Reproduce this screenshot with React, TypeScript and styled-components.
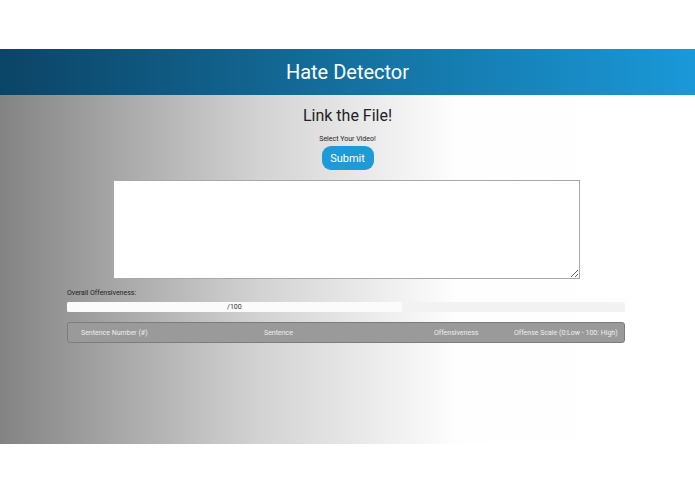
import styled, { createGlobalStyle } from 'styled-components';

const GlobalStyle = createGlobalStyle`
  html, body {
    margin: 0;
    padding: 0;
    background: #fff;
    font-family: Roboto, "Liberation Sans", sans-serif;
  }
`;

const Page = styled.div`
  padding-top: 49px;
  width: 695px;
`;

const Header = styled.header`
  height: 46px;
  display: flex;
  align-items: center;
  justify-content: center;
  background: linear-gradient(90deg, #0b4466 0%, #14709f 50%, #1a98d8 100%);
  color: #fff;
  font-size: 20px;
`;

const Main = styled.main`
  height: 349px;
  background: linear-gradient(90deg, #838383 0%, #d2d2d2 37%, #fefefe 66%, #fff 100%);
  display: flex;
  flex-direction: column;
  align-items: center;
`;

const Heading = styled.h2`
  margin: 11px 0 0;
  font-size: 16px;
  font-weight: 400;
  color: #222;
  line-height: 19px;
`;

const Hint = styled.p`
  margin: 10px 0 0;
  font-size: 7px;
  line-height: 9px;
  color: #222;
`;

const SubmitButton = styled.button`
  margin-top: 2px;
  width: 52px;
  height: 24px;
  border: none;
  border-radius: 9px;
  background: #1f9ad9;
  color: #fff;
  font-family: Roboto, "Liberation Sans", sans-serif;
  font-size: 11px;
  padding: 0;
`;

const TextBox = styled.textarea`
  margin-top: 10px;
  width: 467px;
  height: 99px;
  box-sizing: border-box;
  border: 1px solid #a8a8a8;
  background: #fff;
  resize: vertical;
  align-self: flex-start;
  margin-left: 113px;
`;

const Section = styled.section`
  align-self: stretch;
  padding: 0 70px 0 67px;
`;

const Label = styled.div`
  margin-top: 10px;
  font-size: 7px;
  line-height: 9px;
  color: #222;
`;

const Track = styled.div`
  margin-top: 4px;
  height: 10px;
  background: #f2f2f2;
  border-radius: 2px;
  display: flex;
`;

const Fill = styled.div`
  background: #fbfbfb;
  border-radius: 2px 0 0 2px;
  display: flex;
  align-items: center;
  justify-content: center;
  font-size: 7px;
  color: #333;
`;

const TableHead = styled.div`
  margin-top: 10px;
  height: 21px;
  box-sizing: border-box;
  border: 1px solid #7c7c7c;
  border-radius: 3px;
  background: #9a9a9a;
  display: grid;
  grid-template-columns: 183px 170px 80px 1fr;
  align-items: center;
  padding-left: 13px;
  font-size: 7px;
  color: #eeeeee;
`;

const Cell = styled.span`
  white-space: nowrap;
`;

const columns = ['Sentence Number (#)', 'Sentence', 'Offensiveness', 'Offense Scale (0:Low - 100: High)'];

const App = () => {
  const score = 60;
  return (
    <Page>
      <GlobalStyle />
      <Header>Hate Detector</Header>
      <Main>
        <Heading>Link the File!</Heading>
        <Hint>Select Your Video!</Hint>
        <SubmitButton>Submit</SubmitButton>
        <TextBox />
        <Section>
          <Label>Overall Offensiveness:</Label>
          <Track>
            <Fill style={{ width: `${score}%` }}>/100</Fill>
          </Track>
          <TableHead>
            {columns.map((c) => (
              <Cell key={c}>{c}</Cell>
            ))}
          </TableHead>
        </Section>
      </Main>
    </Page>
  );
};

export default App;
